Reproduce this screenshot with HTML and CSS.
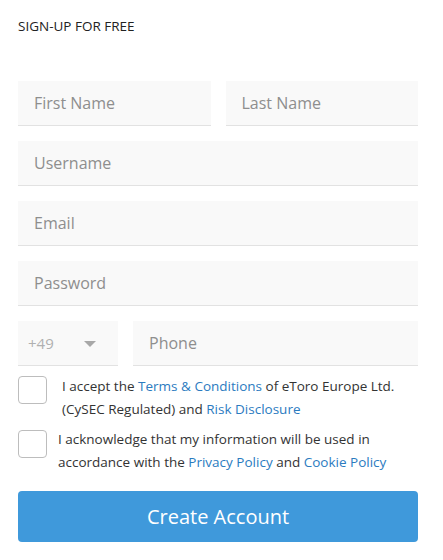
FILE: index.html
```html
<!DOCTYPE html>
<html>
<head>
<meta charset="utf-8">
<link rel="stylesheet" href="styles.css">
</head>
<body>
<div class="page">
  <h1 class="title">SIGN-UP FOR FREE</h1>
  <form class="form">
    <div class="row two">
      <div class="field"><span class="ph">First Name</span></div>
      <div class="field"><span class="ph">Last Name</span></div>
    </div>
    <div class="row"><div class="field"><span class="ph">Username</span></div></div>
    <div class="row"><div class="field"><span class="ph">Email</span></div></div>
    <div class="row"><div class="field"><span class="ph">Password</span></div></div>
    <div class="row phone">
      <div class="field select"><span class="code">+49</span><span class="caret"></span></div>
      <div class="field"><span class="ph">Phone</span></div>
    </div>
    <div class="check first">
      <span class="box"></span>
      <p class="label indent">I accept the <a>Terms &amp; Conditions</a> of eToro Europe Ltd. (CySEC Regulated) and <a>Risk Disclosure</a></p>
    </div>
    <div class="check second">
      <span class="box"></span>
      <p class="label">I acknowledge that my information will be used in accordance with the <a>Privacy Policy</a> and <a>Cookie Policy</a></p>
    </div>
    <div class="btn">Create Account</div>
  </form>
</div>
</body>
</html>
```

FILE: styles.css
```css
* { box-sizing: border-box; }
html, body { margin: 0; padding: 0; background: #fff; }
body { font-family: "Open Sans", "Liberation Sans", sans-serif; color: #333; }
.page { width: 400px; margin-left: 18px; padding-top: 17px; }
.title { margin: 0; font-size: 13.5px; font-weight: 400; line-height: 18px; color: #222; }
.form { margin-top: 46px; display: flex; flex-direction: column; }
.row { display: flex; gap: 15px; margin-bottom: 15px; }
.row.phone { margin-bottom: 10px; }
.field { flex: 1; height: 45px; background: #f9f9f9; border-bottom: 1px solid #e2e2e2; display: flex; align-items: center; padding: 0 16px; }
.ph { font-size: 16px; color: #8e8e8e; }
.select { flex: 0 0 100px; padding: 0 10px; justify-content: space-between; }
.code { font-size: 15px; color: #b0b0b0; }
.caret { width: 0; height: 0; border-left: 6px solid transparent; border-right: 6px solid transparent; border-top: 6px solid #a8a8a8; margin-right: 12px; margin-top: 1px; }
.check { display: flex; align-items: flex-start; }
.check.first { margin-bottom: 10px; }
.check.second { margin-bottom: 18px; }
.box { flex: 0 0 29px; height: 28px; border: 1px solid #bdbdbd; border-radius: 4px; background: #fff; }
.label { margin: 0 0 0 11px; font-size: 13.5px; line-height: 22.5px; color: #333; }
.first .label { margin-left: 15px; margin-top: -1px; }
.second .label { margin-top: -2px; }
.label a { color: #2b7bbf; text-decoration: none; }
.btn { height: 51px; background: #3f99db; border-radius: 4px; color: #fff; font-size: 20px; display: flex; align-items: center; justify-content: center; }
```
